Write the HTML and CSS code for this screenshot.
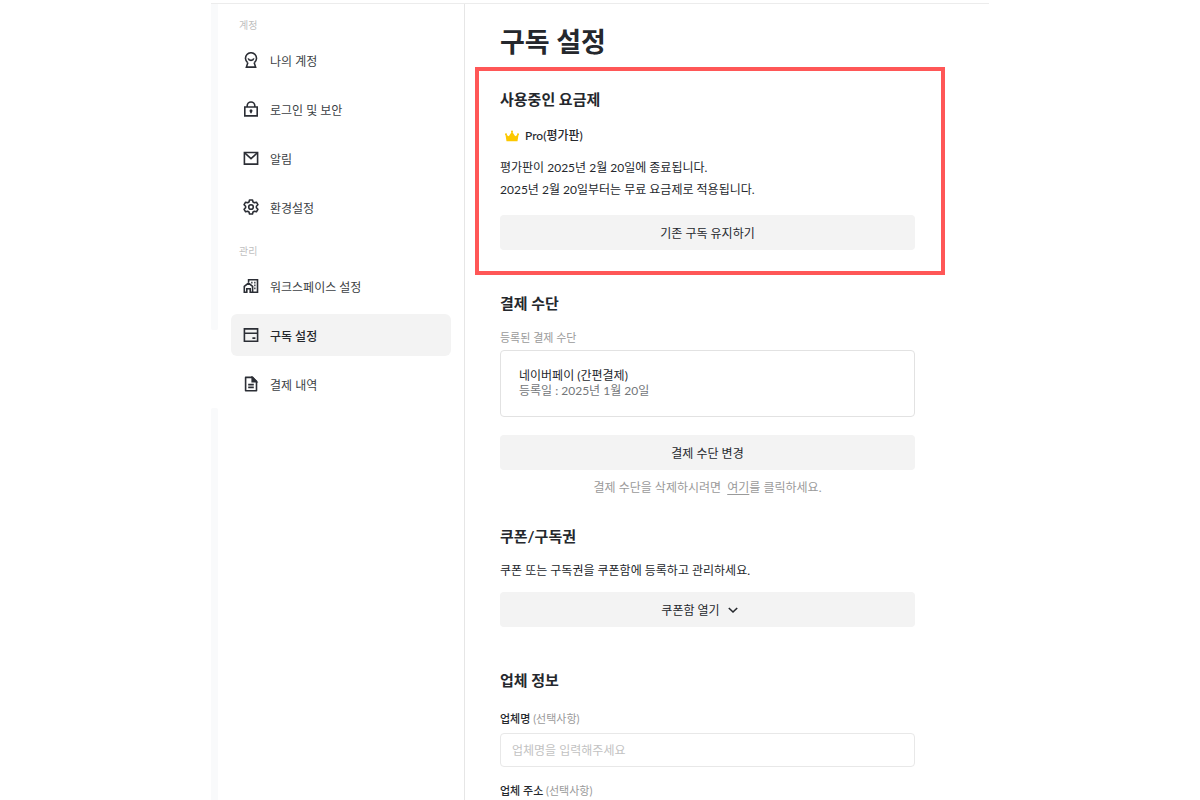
FILE: index.html
```html
<!DOCTYPE html>
<html lang="ko">
<head>
    <meta charset="UTF-8">
    <meta name="viewport" content="width=device-width, initial-scale=1.0">
    <title>구독 설정</title>
    <link rel="stylesheet" href="styles.css">
</head>
<body>
    <div class="page">
        <div class="edge">
            <span class="edge-top"></span>
            <span class="edge-bottom"></span>
        </div>

        <nav class="sidebar">
            <p class="nav-title">계정</p>
            <div class="nav-group">
                <a href="#account" class="nav-item">
                    <svg class="icon" viewBox="0 0 16 16">
                        <path d="M4.6 10.6a5.5 5.5 0 1 1 6.8 0"/>
                        <path d="M5.2 6.4c.7 2.6 4.9 2.6 5.6 0"/>
                        <path d="M4.9 10.4 3.4 15.1h9.2l-1.5-4.7"/>
                    </svg>
                    나의 계정
                </a>
                <a href="#security" class="nav-item">
                    <svg class="icon" viewBox="0 0 16 16">
                        <path d="M1.8 6h12.4v8.9H1.8z"/>
                        <path d="M4.2 6V4.8a3.8 3.8 0 0 1 7.6 0V6"/>
                        <path d="M8 10v2.2"/>
                        <circle cx="8" cy="9.8" r=".7"/>
                    </svg>
                    로그인 및 보안
                </a>
                <a href="#alarm" class="nav-item">
                    <svg class="icon" viewBox="0 0 16 16">
                        <path d="M1.4 2.5h13.2v11.6H1.4z"/>
                        <path d="M2 3.2 8 8.6l6-5.4"/>
                    </svg>
                    알림
                </a>
                <a href="#preferences" class="nav-item">
                    <svg class="icon" viewBox="0 0 16 16">
                        <path stroke-linejoin="round" d="M6.5 1h3l.5 2 1.4.8 2-.6L14.9 5.7l-1.5 1.5v1.6l1.5 1.5-1.5 2.5-2-.6-1.4.8-.5 2h-3L6 13l-1.4-.8-2 .6-1.5-2.5 1.5-1.5V7.2L1.1 5.7l1.5-2.5 2 .6L6 3z"/>
                        <circle cx="8" cy="8" r="2.3"/>
                    </svg>
                    환경설정
                </a>
            </div>

            <p class="nav-title">관리</p>
            <div class="nav-group">
                <a href="#workspace" class="nav-item">
                    <svg class="icon" viewBox="0 0 16 16">
                        <path d="M5.6 4V1.8h8.9v12.4H9.6"/>
                        <path d="M1.3 14.2V8.5l4.2-3.4 4.1 3.4v5.7H7.2v-3.4H3.8v3.4z"/>
                        <path d="M8.2 4.6h1.3M11.2 4.6h1.3M11.2 7.4h1.3M11.2 10.4h1.3"/>
                    </svg>
                    워크스페이스 설정
                </a>
                <a href="#subscription" class="nav-item active">
                    <svg class="icon" viewBox="0 0 16 16">
                        <path d="M1.4 1.9h13.2v12.3H1.4zM1.4 6.3h13.2M9.4 11.1h3"/>
                    </svg>
                    구독 설정
                </a>
                <a href="#history" class="nav-item">
                    <svg class="icon" viewBox="0 0 16 16">
                        <path stroke-linejoin="round" d="M2.6 1.4h7l3.9 3.9v9.4H2.6z"/>
                        <path class="fill" d="M9.2 1.4v4.2h4.2z"/>
                        <path d="M5.2 8.6h5.6M5.2 11.4h5.6"/>
                    </svg>
                    결제 내역
                </a>
            </div>
        </nav>

        <main class="content">
            <h1>구독 설정</h1>

            <section class="section plan">
                <h2>사용중인 요금제</h2>
                <p class="plan-name">
                    <svg class="crown" viewBox="0 0 14 12">
                        <path d="M.4 4.2 3.8 6.2 7 1.6l3.2 4.6 3.4-2-1.1 7.1h-11z"/>
                        <circle cx="7" cy="1.6" r="1"/>
                        <circle cx="1" cy="4.2" r="1"/>
                        <circle cx="13" cy="4.2" r="1"/>
                    </svg>
                    Pro(평가판)
                </p>
                <p class="text">
                    평가판이 2025년 2월 20일에 종료됩니다.<br>
                    2025년 2월 20일부터는 무료 요금제로 적용됩니다.
                </p>
                <button type="button" class="btn">기존 구독 유지하기</button>
            </section>

            <section class="section payment">
                <h2>결제 수단</h2>
                <p class="caption">등록된 결제 수단</p>
                <div class="card">
                    <p>네이버페이 (간편결제)</p>
                    <p class="card-date">등록일 : 2025년 1월 20일</p>
                </div>
                <button type="button" class="btn">결제 수단 변경</button>
                <p class="hint">결제 수단을 삭제하시려면 &nbsp;<a href="#delete">여기</a>를 클릭하세요.</p>
            </section>

            <section class="section coupon">
                <h2>쿠폰/구독권</h2>
                <p class="text">쿠폰 또는 구독권을 쿠폰함에 등록하고 관리하세요.</p>
                <button type="button" class="btn">
                    쿠폰함 열기
                    <svg class="chevron" viewBox="0 0 10 10">
                        <path d="M.8 3 5 7l4.2-4"/>
                    </svg>
                </button>
            </section>

            <section class="section company">
                <h2>업체 정보</h2>
                <label for="companyName">업체명 <span>(선택사항)</span></label>
                <input type="text" id="companyName" name="companyName" placeholder="업체명을 입력해주세요">
                <p class="label">업체 주소 <span>(선택사항)</span></p>
            </section>
        </main>
    </div>
</body>
</html>
```

FILE: styles.css
```css
* {
    box-sizing: border-box;
}
body {
    margin: 0;
    padding-top: 3px;
    background-color: #fff;
    color: #25282d;
    font-family: Lato, "Noto Sans CJK KR", sans-serif;
    font-size: 12px;
}
h1, h2, p {
    margin: 0;
}
.page {
    display: flex;
    max-width: 778px;
    min-height: calc(100vh - 3px);
    margin: 0 auto;
    border-top: 1px solid #ececec;
}

/* left edge */
.edge {
    display: flex;
    flex-direction: column;
    gap: 78px;
    width: 7px;
    flex-shrink: 0;
}
.edge span {
    background-color: #f9fafb;
}
.edge-top {
    height: 326px;
    border-radius: 0 0 2px 2px;
}
.edge-bottom {
    flex: 1;
    border-radius: 2px 2px 0 0;
}

/* sidebar */
.sidebar {
    width: 247px;
    flex-shrink: 0;
    padding: 13px;
    border-right: 1px solid #e6e6e6;
}
.nav-title {
    padding-left: 8px;
    margin-bottom: 6px;
    color: #bfbfbf;
    font-size: 10px;
    line-height: 16px;
}
.nav-group {
    display: flex;
    flex-direction: column;
    gap: 7px;
    margin-bottom: 15px;
}
.nav-item {
    display: flex;
    align-items: center;
    gap: 11px;
    height: 42px;
    padding: 0 12px;
    border-radius: 6px;
    color: #3c3f45;
    text-decoration: none;
}
.nav-item.active {
    background-color: #f3f3f3;
    color: #25282d;
    font-weight: 500;
}
.icon {
    width: 16px;
    height: 16px;
    fill: none;
    stroke: #2b2e35;
    stroke-width: 1.6;
}
.icon .fill {
    fill: #2b2e35;
}

/* content */
.content {
    flex: 1;
    padding: 20px 44px 0 10px;
}
h1 {
    padding: 0 25px;
    margin-bottom: 7px;
    font-size: 27px;
    font-weight: 700;
    line-height: 36px;
}
h2 {
    margin-bottom: 15px;
    font-size: 15px;
    font-weight: 700;
    line-height: 24px;
}
.section {
    padding: 0 30px 0 25px;
}
.plan {
    padding: 16px 26px 21px 21px;
    margin-bottom: 16px;
    border: 4px solid #ff5757;
}
.plan-name {
    display: flex;
    align-items: center;
    gap: 6px;
    padding-left: 5px;
    margin-bottom: 11px;
    font-weight: 500;
    line-height: 20px;
}
.crown {
    width: 14px;
    height: 12px;
    fill: #fcc800;
}
.text {
    line-height: 22px;
}
.btn {
    display: flex;
    align-items: center;
    justify-content: center;
    gap: 8px;
    width: 100%;
    height: 35px;
    border: none;
    border-radius: 4px;
    background-color: #f3f3f3;
    color: #25282d;
    font-family: inherit;
    font-size: 12px;
    cursor: pointer;
}
.plan .btn {
    margin-top: 14px;
}
.payment {
    margin-bottom: 26px;
}
.caption {
    margin-bottom: 4px;
    color: #9a9a9a;
    font-size: 11px;
    line-height: 16px;
}
.card {
    padding: 17px 18px 18px;
    margin-bottom: 18px;
    border: 1px solid #e2e2e2;
    border-radius: 4px;
    line-height: 15px;
}
.card-date {
    color: #737679;
}
.hint {
    margin-top: 8px;
    color: #9a9a9a;
    line-height: 20px;
    text-align: center;
}
.hint a {
    color: inherit;
    text-underline-offset: 2px;
}
.coupon {
    margin-bottom: 41px;
}
.coupon h2 {
    margin-bottom: 12px;
}
.coupon .btn {
    padding-right: 22px;
    margin-top: 10px;
}
.chevron {
    width: 10px;
    height: 10px;
    fill: none;
    stroke: #25282d;
    stroke-width: 1.6;
}
.company h2 {
    margin-bottom: 19px;
}
label,
.label {
    display: block;
    font-size: 11px;
    font-weight: 500;
    line-height: 16px;
}
label span,
.label span {
    color: #9a9a9a;
    font-weight: 400;
}
input[type="text"] {
    display: block;
    width: 100%;
    height: 34px;
    padding: 0 11px;
    margin: 6px 0 16px;
    border: 1px solid #e8e8e8;
    border-radius: 4px;
    font-family: inherit;
    font-size: 12px;
}
input::placeholder {
    color: #c2c2c2;
}
```
